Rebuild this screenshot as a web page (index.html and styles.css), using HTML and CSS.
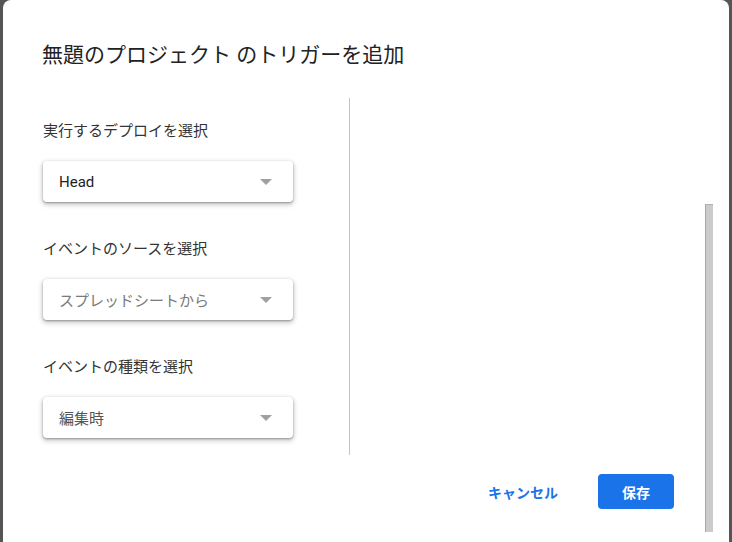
FILE: index.html
```html
<!DOCTYPE html>
<html lang="ja">
<head>
<meta charset="utf-8">
<link rel="stylesheet" href="styles.css">
</head>
<body>
<div class="dialog">
  <div class="main">
    <h1 class="title">無題のプロジェクト のトリガーを追加</h1>
    <div class="content">
      <div class="left">
        <div class="field">
          <div class="label">実行するデプロイを選択</div>
          <div class="select"><span class="value">Head</span><span class="arrow"></span></div>
        </div>
        <div class="field">
          <div class="label">イベントのソースを選択</div>
          <div class="select"><span class="value muted">スプレッドシートから</span><span class="arrow"></span></div>
        </div>
        <div class="field">
          <div class="label">イベントの種類を選択</div>
          <div class="select"><span class="value dim">編集時</span><span class="arrow"></span></div>
        </div>
      </div>
      <div class="right"></div>
    </div>
    <div class="footer">
      <button class="btn-text">キャンセル</button>
      <button class="btn-primary">保存</button>
    </div>
  </div>
  <div class="track"><div class="thumb"></div></div>
</div>
</body>
</html>
```

FILE: styles.css
```css
html, body {
  margin: 0;
  padding: 0;
  height: 100%;
}
body {
  background: #555555;
  font-family: Roboto, "Noto Sans CJK JP", sans-serif;
  overflow: hidden;
}
.dialog {
  margin: 0 3px;
  height: 542px;
  background: #ffffff;
  border-radius: 8px 8px 0 0;
  display: flex;
}
.main {
  flex: 1;
  display: flex;
  flex-direction: column;
}
.title {
  margin: 0;
  padding: 40px 0 0 39px;
  font-size: 21px;
  line-height: 30px;
  font-weight: 400;
  color: #222222;
  box-sizing: border-box;
  height: 98px;
}
.content {
  display: flex;
  height: 357px;
}
.left {
  box-sizing: border-box;
  width: 347px;
  border-right: 1px solid #c4c4c4;
  padding: 23px 0 0 40px;
  display: flex;
  flex-direction: column;
  gap: 37px;
}
.label {
  font-size: 15px;
  line-height: 20px;
  color: #333333;
  margin-bottom: 20px;
}
.select {
  width: 250px;
  height: 41px;
  box-sizing: border-box;
  border-radius: 4px;
  background: #fff;
  box-shadow: 0 1px 2px rgba(0,0,0,0.3), 0 2px 5px 1px rgba(0,0,0,0.2);
  display: flex;
  align-items: center;
  justify-content: space-between;
  padding: 0 21px 0 16px;
}
.value {
  font-size: 15px;
  color: #222222;
}
.value.muted {
  color: #7a7a7a;
}
.value.dim {
  color: #555555;
}
.arrow {
  width: 0;
  height: 0;
  border-left: 6px solid transparent;
  border-right: 6px solid transparent;
  border-top: 6px solid #a0a0a0;
  margin-top: 1px;
}
.right {
  flex: 1;
}
.footer {
  display: flex;
  justify-content: flex-end;
  align-items: center;
  gap: 34px;
  padding: 19px 31px 0 0;
}
.btn-text {
  border: none;
  background: none;
  padding: 0 6px;
  font-family: inherit;
  font-size: 14px;
  font-weight: 700;
  color: #1a73e8;
}
.btn-primary {
  border: none;
  background: #1a73e8;
  color: #ffffff;
  font-family: inherit;
  font-size: 14px;
  font-weight: 700;
  width: 76px;
  height: 35px;
  border-radius: 4px;
}
.track {
  width: 8px;
  margin-right: 16px;
  padding-top: 204px;
}
.thumb {
  height: 328px;
  box-sizing: border-box;
  background: #cbcbcb;
  border-left: 1px solid #a9a9a9;
  border-top: 1px solid #b0b0b0;
}
```
